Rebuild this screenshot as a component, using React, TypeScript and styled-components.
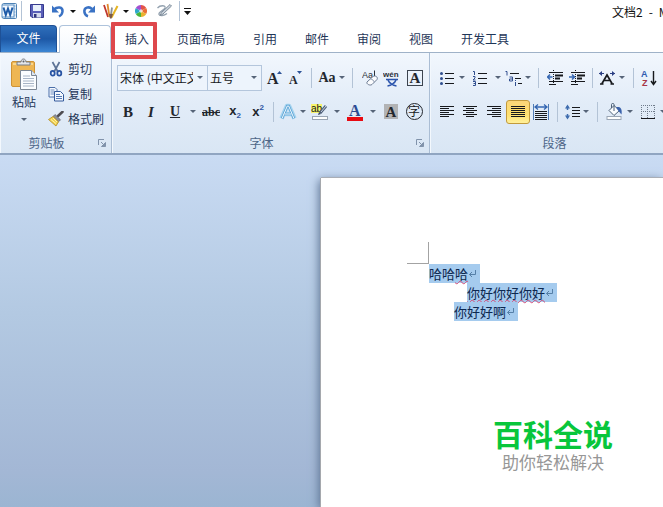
import React from "react";
import styled, { createGlobalStyle, css } from "styled-components";

const Global = createGlobalStyle`
  * { box-sizing: border-box; }
  html, body, #root { height: 100%; }
  body {
    margin: 0;
    overflow: hidden;
    background: #fff;
    font: 12px/16px "Noto Sans CJK SC", "Liberation Sans", sans-serif;
    color: #1f3658;
  }
  button, select { font: inherit; color: inherit; }
`;

const Window = styled.div`
  display: flex;
  flex-direction: column;
  min-height: 100%;
  overflow: hidden;
`;

/* ---------- shared controls ---------- */

const Tool = styled.button<{ $w: number; $active?: boolean }>`
  flex: none;
  display: flex;
  align-items: center;
  justify-content: center;
  width: ${(p) => p.$w}px;
  height: 24px;
  padding: 0;
  border: 0;
  background: none;
  ${(p) =>
    p.$active &&
    css`
      border: 1px solid #c29a3c;
      border-radius: 3px;
      background: linear-gradient(#fbd67a, #ffe06e 60%, #fff09a);
    `}
`;

const Divider = styled.span<{ $w: number }>`
  flex: none;
  display: flex;
  justify-content: center;
  width: ${(p) => p.$w}px;
  &::before {
    content: "";
    width: 1px;
    height: 20px;
    background: #b3c3d6;
  }
`;

const Glyph = styled.span<{ $size?: number; $sans?: boolean }>`
  font: bold ${(p) => p.$size ?? 15}px/16px
    ${(p) => (p.$sans ? '"Liberation Sans", sans-serif' : '"Liberation Serif", serif')};
  color: #23272e;
  white-space: nowrap;
`;
const Italic = styled(Glyph)`font-style: italic;`;
const Underlined = styled(Glyph)`text-decoration: underline;`;
const Struck = styled(Glyph)`text-decoration: line-through;`;
const Script = styled.small<{ $up?: boolean }>`
  font-size: 8px;
  line-height: 8px;
  color: #2f56a3;
  vertical-align: ${(p) => (p.$up ? "6px" : "-3px")};
`;

const Caret = ({ dark }: { dark?: boolean }) => (
  <svg width="6" height="3" viewBox="0 0 6 3" aria-hidden>
    <path d="M0 0h6L3 3z" fill={dark ? "#111" : "#566478"} />
  </svg>
);
const Drop = ({ w = 8, label, dark }: { w?: number; label: string; dark?: boolean }) => (
  <Tool $w={w} aria-label={label}>
    <Caret dark={dark} />
  </Tool>
);

type IconProps = { w?: number; h?: number; children: React.ReactNode };
const Icon = ({ w = 16, h = 16, children }: IconProps) => (
  <svg width={w} height={h} viewBox={`0 0 ${w} ${h}`} fill="none" aria-hidden>
    {children}
  </svg>
);

/* ---------- title bar ---------- */

const TitleBar = styled.header`
  display: flex;
  align-items: center;
  height: 24px;
  padding-bottom: 2px;
  white-space: nowrap;
  overflow: hidden;
`;
const QuickAccess = styled.div`
  flex: none;
  display: flex;
  align-items: center;
  width: 192px;
`;
const Title = styled.h1`
  flex: none;
  display: flex;
  gap: 6px;
  margin: 2px 0 0 420px;
  font-size: 12px;
  font-weight: 400;
  line-height: 16px;
  color: #111;
`;

const WordLogo = () => (
  <Icon>
    <rect x="1.500" y=".5" width="14" height="15" rx="1" fill="#e9f2fb" stroke="#4f83b5" />
    <path d="M12.500 3h2M12.500 6h2M12.500 9h2M12.500 12h2" stroke="#8fb0d2" />
    <rect x="1" y="2" width="12" height="12" fill="#f4f9fe" stroke="#5b8fc4" />
    <path d="M2.500 4.500 4.800 12 7 5.500 9.200 12 11.500 4.500" stroke="#1f5ca8" strokeWidth="2" />
  </Icon>
);
const SaveIcon = () => (
  <Icon w={14} h={14}>
    <path d="M.5.5h13v13H2L.5 12z" fill="#5a5fb8" stroke="#363a8e" />
    <rect x="3" y="1" width="8" height="6" fill="#e8effa" />
    <rect x="3" y="9" width="8" height="4.500" fill="#d4d9ec" />
    <rect x="4" y="10" width="2.500" height="3.500" fill="#30347c" />
  </Icon>
);
const UndoIcon = () => (
  <Icon w={14} h={14}>
    <path d="M3 5.500C6 2.500 12 2.500 11.500 7.500c-.2 2.400-1.600 4-3.500 5" stroke="#3a72c4" strokeWidth="2.500" />
    <path d="M1 1.500v7h7z" fill="#3a72c4" />
  </Icon>
);
const RedoIcon = () => (
  <Icon w={14} h={14}>
    <path d="M10 5C7 2 1.800 3.500 2.400 8c.3 2 1.600 3.600 3.600 4.200" stroke="#3a72c4" strokeWidth="2.500" />
    <path d="M13 1.500v7H6z" fill="#3a72c4" />
  </Icon>
);
const PensIcon = () => (
  <Icon>
    <path d="m1 2 4 12" stroke="#c0392f" strokeWidth="1.800" />
    <path d="m4.500 1 2 13" stroke="#e08a2e" strokeWidth="1.800" />
    <path d="M9 4.500 7.500 15" stroke="#8b9097" strokeWidth="1.800" />
    <path d="M14.500 3 8.500 14.500" stroke="#e6b422" strokeWidth="2" />
    <path d="m6 11 1 4.500h1.500L10 11" fill="#7b5a48" />
  </Icon>
);
const WheelIcon = () => (
  <Icon w={12} h={12}>
    <path d="M6 6V0a6 6 0 0 1 5.200 3z" fill="#e2544a" />
    <path d="M6 6 11.200 3a6 6 0 0 1 0 6z" fill="#ea6f35" />
    <path d="M6 6l5.200 3A6 6 0 0 1 6 12z" fill="#e9b22f" />
    <path d="M6 6v6A6 6 0 0 1 .8 9z" fill="#47b53c" />
    <path d="M6 6 .8 9a6 6 0 0 1 0-6z" fill="#2da9c9" />
    <path d="M6 6 .8 3A6 6 0 0 1 6 0z" fill="#a24fd0" />
    <circle cx="6" cy="6" r="1.800" fill="#fff" opacity=".7" />
  </Icon>
);
const InkIcon = () => (
  <Icon w={16} h={14}>
    <path d="M1.500 4C4 1 10 1 9 4c-1 2.500-7 4-6 6.500.6 1.500 5 1.500 8-1" stroke="#93a1af" strokeWidth="1.300" />
    <path d="M14 .5 15.500 2 7 10l-3 1.500L5.500 8.500z" fill="#cbd4dd" stroke="#7d8b99" />
  </Icon>
);
const CustomizeIcon = () => (
  <Icon w={7} h={7}>
    <path d="M0 3h7L3.500 7z" fill="#111" />
    <path d="M0 .5h7" stroke="#111" />
  </Icon>
);

/* ---------- tabs ---------- */

const Tabs = styled.nav`
  display: flex;
  height: 29px;
  padding-top: 1px;
  border-bottom: 1px solid #9fb2c8;
`;
const FileTab = styled.button`
  flex: none;
  width: 57px;
  margin-right: 2px;
  padding: 0 0 2px;
  border: 1px solid #1f5196;
  border-bottom: 0;
  border-radius: 0 4px 0 0;
  background: linear-gradient(#2f6fbb, #1d58a6 50%, #3c86d4);
  color: #fff;
`;
const Tab = styled.button<{ $active?: boolean }>`
  position: relative;
  flex: none;
  height: 28px;
  padding: 0 13px 2px;
  border: 1px solid transparent;
  border-bottom: 0;
  background: none;
  ${(p) =>
    p.$active &&
    css`
      height: 28px;
      margin-bottom: -1px;
      border-color: #aec3dc;
      border-radius: 4px 4px 0 0;
      background: linear-gradient(#fff, #f3f8fd);
    `}
`;
const Callout = styled.span`
  position: absolute;
  z-index: 2;
  inset: -4px 5px -6px -1px;
  border: 4px solid #de484c;
  border-radius: 1px;
  pointer-events: none;
`;

/* ---------- ribbon ---------- */

const Ribbon = styled.div`
  display: flex;
  height: 102px;
  border-bottom: 2px solid #90a5c1;
  background: linear-gradient(#f2f7fd, #e2ecf8 50%, #d9e6f4);
  overflow: hidden;
`;
const Group = styled.section<{ $w?: number }>`
  flex: ${(p) => (p.$w ? `0 0 ${p.$w}px` : "1 0 268px")};
  display: flex;
  flex-direction: column;
  border-right: 1px solid #aabdd4;
  box-shadow: inset 1px 0 #f3f8fd;
`;
const Rows = styled.div<{ $pad: number }>`
  flex: 1;
  display: flex;
  flex-direction: column;
  gap: 9px;
  padding: 12px 0 0 ${(p) => p.$pad}px;
`;
const Row = styled.div`
  display: flex;
  align-items: center;
  height: 25px;
`;
const GroupFooter = styled.footer`
  display: flex;
  align-items: center;
  height: 20px;
  color: #4d6587;
`;
const GroupName = styled.span`
  flex: 1;
  text-align: center;
`;
const GroupFoot = ({ name, launcher = true }: { name: string; launcher?: boolean }) => (
  <GroupFooter>
    <GroupName>{name}</GroupName>
    <Tool $w={18} aria-label={name}>
      {launcher && (
        <Icon w={8} h={8}>
          <path d="M.5 6V.5H6" stroke="#8193ab" />
          <path d="M3 3l3 3M7.500 3.500v4h-4z" stroke="#8193ab" fill="#8193ab" />
        </Icon>
      )}
    </Tool>
  </GroupFooter>
);

const ClipboardBody = styled.div`
  flex: 1;
  display: flex;
`;
const PasteButton = styled.button`
  flex: none;
  display: flex;
  flex-direction: column;
  align-items: center;
  width: 48px;
  padding: 5px 0 0;
  border: 0;
  background: none;
  line-height: 24px;
  & > svg:last-child { margin-top: 4px; }
`;
const ClipList = styled.div`
  display: flex;
  flex-direction: column;
  padding-top: 3px;
`;
const ClipButton = styled.button`
  display: flex;
  align-items: center;
  gap: 4px;
  height: 25px;
  padding: 0;
  border: 0;
  background: none;
  white-space: nowrap;
`;

const PasteIcon = () => (
  <Icon w={28} h={32}>
    <rect x="1.500" y="3.500" width="23" height="25" rx="1.500" fill="#eeb653" stroke="#cf9335" />
    <path d="M3 5h20v2H3z" fill="#f8d68d" />
    <path d="M7 7V4h4c0-4 5-4 5 0h4v3z" fill="#e2e5e9" stroke="#767c85" />
    <circle cx="13.500" cy="3.500" r="1" fill="#5b616b" />
    <path d="M10.500 12.500h11l5 5v14h-16z" fill="#fbfdff" stroke="#7c8795" />
    <path d="M21.500 12.500v5h5" fill="#dfe7f0" stroke="#7c8795" />
    <path d="M13 18h7M13 20.500h11M13 23h11M13 25.500h11M13 28h11" stroke="#a7b4c6" />
  </Icon>
);
const CutIcon = () => (
  <Icon>
    <path d="M4.500 1 10 11M11.500 1 6 11" stroke="#5d7396" strokeWidth="1.700" />
    <ellipse cx="4.700" cy="12.200" rx="2" ry="2.400" stroke="#2854a3" strokeWidth="1.800" />
    <ellipse cx="11.300" cy="12.200" rx="2" ry="2.400" stroke="#2854a3" strokeWidth="1.800" />
  </Icon>
);
const CopyIcon = () => (
  <Icon>
    <path d="M1 1.500h6l2 2V11H1z" fill="#f4f8fe" stroke="#4b6fa9" />
    <path d="M2.500 4h4M2.500 6h4M2.500 8h4" stroke="#6d8dc0" />
    <path d="M6.500 5.500h6l3 3v6.500h-9z" fill="#f4f8fe" stroke="#33599b" />
    <path d="M8 8.500h4M8 10.500h6M8 12.500h6" stroke="#5479b5" />
  </Icon>
);
const BrushIcon = () => (
  <Icon>
    <path d="M14.500.8 10 5" stroke="#4f4d52" strokeWidth="2.600" strokeLinecap="round" />
    <path d="m7 3.500 5.500 5.300-2 2L5 5.500z" fill="#8c8f98" stroke="#5c5f68" strokeWidth=".7" />
    <path d="M5 5.500.5 8.500 8 15l2.500-4.200z" fill="#f2d24f" stroke="#b38b25" strokeWidth=".8" />
    <path d="m3 8.500 5 4M5 7l4 4" stroke="#fff3a8" />
  </Icon>
);

/* ---------- font group ---------- */

const Combo = styled.label<{ $w: number }>`
  flex: none;
  display: flex;
  align-items: center;
  width: ${(p) => p.$w}px;
  height: 26px;
  padding-right: 4px;
  border: 1px solid #b4c6dc;
  background: #edf4fc;
  & + & { border-left: 0; }
`;
const Picker = styled.select`
  flex: 1;
  min-width: 0;
  margin-right: 4px;
  padding: 0 0 0 2px;
  border: 0;
  appearance: none;
  background: none;
  color: #16181c;
  text-overflow: clip;
  outline: none;
`;

const GrowIcon = ({ down }: { down?: boolean }) => (
  <Icon w={16} h={16}>
    <text x="1" y="14" fontFamily="Liberation Serif" fontWeight="bold" fontSize={down ? 12 : 16} fill="#23272e">A</text>
    <path d={down ? "M9 1h5l-2.500 3z" : "M11 4h5l-2.500-3z"} fill="#2d5397" />
  </Icon>
);
const ClearIcon = () => (
  <Icon>
    <text x="0" y="8" fontFamily="Liberation Sans" fontSize="9" fill="#2b3038">Aa</text>
    <path d="M12.500 .5v6" stroke="#2b3038" />
    <path d="m5 12 6-5.500c2-1.500 5.500.5 4 3L10 14.500c-2 1.500-6-.5-5-2.500z" fill="#fbfcfe" stroke="#6a7a92" />
    <path d="M8.500 9c2 .3 3.300 1.500 3.800 3.300" stroke="#8c9ab0" />
  </Icon>
);
const PinyinIcon = () => (
  <Icon w={18} h={18}>
    <text x="0" y="8" fontFamily="Liberation Sans" fontWeight="bold" fontSize="8" fill="#2b3038">wén</text>
    <path d="M3 10.500h12M5 11c1 3 5 5.500 8.500 6M13 11c-1 3-5 5.500-8.500 6" stroke="#2c55ad" strokeWidth="1.500" />
  </Icon>
);
const BoxedA = styled(Glyph)`
  width: 16px;
  height: 16px;
  border: 1px solid #3c444f;
  line-height: 14px;
  text-align: center;
`;
const ShadedA = styled(Glyph)`
  width: 14px;
  height: 15px;
  background: #b2b3b5;
  text-align: center;
`;
const CircledChar = styled.span`
  width: 17px;
  height: 17px;
  border: 1px solid #23272e;
  border-radius: 50%;
  font-size: 12px;
  line-height: 14px;
  color: #16181c;
  text-align: center;
`;
const GlowIcon = () => (
  <Icon w={18} h={18}>
    <path d="M2.500 15.500 8 3h2l5.500 12.500M5 11h8" stroke="#a5d3ef" strokeWidth="4.500" strokeLinejoin="round" />
    <path d="M3 15.500 8.300 3h1.400L15 15.500M5.500 11h7" stroke="#5ba3d5" strokeWidth="2.500" />
    <path d="M3 15.500 8.300 3h1.400L15 15.500M5.500 11h7" stroke="#f1f9ff" />
  </Icon>
);
const HighlightIcon = () => (
  <Icon w={18} h={18}>
    <rect x="0" y="1" width="11" height="9" fill="#f7f46c" />
    <text x="0" y="9" fontFamily="Liberation Sans" fontSize="10" fill="#16181c">ab</text>
    <path d="m15 3-6 7" stroke="#50617c" strokeWidth="3" />
    <path d="m15 3-5 6" stroke="#c9d4e3" />
    <path d="M8 9l2 2-3 1z" fill="#38465d" />
    <rect x="1.500" y="13.500" width="15" height="3" fill="#fdfefe" stroke="#9aa6b5" />
  </Icon>
);
const FontColorIcon = () => (
  <Icon w={16} h={18}>
    <text x="2" y="13" fontFamily="Liberation Serif" fontWeight="bold" fontSize="16" fill="#2c4c94">A</text>
    <path d="M0 14h16v4H0z" fill="#e80a12" />
  </Icon>
);

/* ---------- paragraph group ---------- */

const INK = "#17191d";
const NAVY = "#304f8f";

const BulletsIcon = () => (
  <Icon>
    <path d="M6 3.500h9M6 8.500h9M6 13.500h9" stroke={INK} />
    <circle cx="2.500" cy="3.500" r="1.500" fill={NAVY} />
    <circle cx="2.500" cy="8.500" r="1.500" fill={NAVY} />
    <circle cx="2.500" cy="13.500" r="1.500" fill={NAVY} />
  </Icon>
);
const NumbersIcon = () => (
  <Icon>
    <path d="M6 3.500h9M6 8.500h9M6 13.500h9" stroke={INK} />
    <path d="M1 1.500h1.500V5M1 6.500h2v1.500l-2 2h2.500M1 11.500h2.500v4H1M1.500 13.500h2" stroke={NAVY} />
  </Icon>
);
const LevelsIcon = () => (
  <Icon w={18}>
    <path d="M6 3.500h9M11 8.500h6M14 13.500h4" stroke={INK} />
    <path d="M1.500 1.500H3V5.500M5.500 7h3v4h-3V9h3M11.500 12v4M11.500 10v1" stroke={NAVY} />
  </Icon>
);
const IndentIcon = ({ right }: { right?: boolean }) => (
  <Icon>
    <path d="M2 2.500h14M2 11.500h14M2 14.500h7" stroke={INK} />
    <path d="M8 5.500h8M8 8.500h5" stroke={INK} strokeWidth="2" />
    <path d="M6.500 0v16" stroke={INK} strokeDasharray="1 1" />
    <path d={right ? "M0 7h5M3 4.500 5.500 7 3 9.500" : "M5.500 7h-5M3 4.500.5 7 3 9.500"} stroke="#3567b2" strokeWidth="1.500" />
  </Icon>
);
const AsianLayoutIcon = () => (
  <Icon>
    <path d="M1 14h3.500M11.500 14H15M3 13.500 8 5l5 8.500M5 10.500h6" stroke={INK} strokeWidth="1.700" />
    <path d="M0 3.500h5M11 3.500h5" stroke="#2b3f83" />
    <path d="M3 1v5L0 3.500zM13 1v5l3-2.500z" fill="#2b3f83" />
  </Icon>
);
const SortIcon = () => (
  <Icon w={16} h={18}>
    <text x="0" y="8" fontFamily="Liberation Sans" fontWeight="bold" fontSize="9" fill="#2f5bb0">A</text>
    <text x="1" y="17" fontFamily="Liberation Sans" fontWeight="bold" fontSize="9" fill="#a63546">Z</text>
    <path d="M12.500 2v13M10 12l2.500 3.500L15 12" stroke={INK} strokeWidth="1.400" />
  </Icon>
);
const alignPaths = {
  left: "M1 2.500h14M1 4.500h9M1 6.500h14M1 8.500h9M1 10.500h14M1 12.500h9",
  center: "M1 2.500h14M4 4.500h8M1 6.500h14M4 8.500h8M1 10.500h14M4 12.500h8",
  right: "M1 2.500h14M6 4.500h9M1 6.500h14M6 8.500h9M1 10.500h14M6 12.500h9",
  justify: "M1 2.500h14M1 4.500h14M1 6.500h14M1 8.500h14M1 10.500h14M1 12.500h14",
};
const AlignIcon = ({ kind }: { kind: keyof typeof alignPaths }) => (
  <Icon>
    <path d={alignPaths[kind]} stroke={INK} />
  </Icon>
);
const DistributeIcon = () => (
  <Icon>
    <path d="M.5 0v16M15.500 0v16" stroke="#4f7bb5" />
    <path d="M2 3h12M5 .5 2 3l3 2.500M11 .5 14 3l-3 2.500" stroke="#3567b2" strokeWidth="1.300" />
    <path d="M2 7.500h12M2 9.500h12M2 11.500h12M2 13.500h12M2 15.500h12" stroke={INK} />
  </Icon>
);
const SpacingIcon = () => (
  <Icon>
    <path d="M8 3.500h8M8 6.500h8M8 9.500h8M8 12.500h8" stroke={INK} />
    <path d="M3.500 2v4M3.500 10v4" stroke="#3f6dae" strokeWidth="1.500" />
    <path d="M1 4.500 3.500.5 6 4.500zM1 11.500l2.500 4 2.500-4z" fill="#3f6dae" />
  </Icon>
);
const FillIcon = () => (
  <Icon w={17} h={17}>
    <path d="m3 7.500 5-5 5.500 5L8 12.500z" fill="#fbfdff" stroke="#4d6178" />
    <path d="M8 8V1.500c0-1.500-2.500-1.500-2.500 0V5" stroke="#4d6178" />
    <path d="M10 4.500c4-1.500 6.500 1 5.500 7l-3-3.500z" fill="#3b62ab" />
    <rect x="1" y="13.500" width="14" height="3" fill="#fdfefe" stroke="#9aa6b5" />
  </Icon>
);
const BorderIcon = () => (
  <Icon w={14} h={14}>
    <path d="M0 .5h14M0 6.500h14M.5 0v13M6.500 0v13M13.500 0v13" stroke="#6f7b8b" strokeDasharray="1 1" />
    <path d="M0 13.500h14" stroke={INK} />
  </Icon>
);

/* ---------- document ---------- */

const Workspace = styled.main`
  flex: 1;
  display: grid;
  grid-template-columns: 321px 1fr;
  padding-top: 23px;
  background: linear-gradient(#c9dbf3, #b3c9e2 45%, #a3b7d5 90%, #9bb5d2);
`;
const Page = styled.article`
  grid-column: 2;
  min-height: 329px;
  padding: 64px 0 0 86px;
  background: #fff;
  box-shadow: -1px 0 #a5a8ad, 0 -1px #a9aeb6, -2px 2px 9px 0 #5b7191;
`;
const MarginCorner = styled.div`
  width: 22px;
  height: 22px;
  border: solid #a3a3a3;
  border-width: 0 1px 1px 0;
`;
const Line = styled.p<{ $indent?: number }>`
  display: flex;
  height: 19px;
  margin: 0 0 0 ${(p) => 22 + (p.$indent ?? 0)}px;
  font-size: 13px;
  line-height: 19px;
  color: #0d2850;
`;
const Selected = styled.span`
  display: flex;
  align-items: center;
  padding-right: 3px;
  background: #a5cbee;
  white-space: nowrap;
`;
const Misspelt = styled.span`
  text-decoration: underline wavy #cf4b78 1px;
  text-underline-offset: 1px;
  text-decoration-skip-ink: none;
`;
const ReturnMark = () => (
  <Icon w={9} h={9}>
    <path d="M7.500 1v4.500H1.500M4 3 1.500 5.500 4 8" stroke="#5680a8" />
  </Icon>
);
const Brand = styled.aside`
  display: flex;
  flex-direction: column;
  align-items: center;
  width: 122px;
  margin: 94px 0 0 85px;
  white-space: nowrap;
`;
const BrandName = styled.strong`
  font-size: 30px;
  font-weight: 700;
  line-height: 36px;
  color: #08c63b;
`;
const BrandLine = styled.span`
  font-size: 17px;
  font-weight: 400;
  line-height: 22px;
  color: #979797;
`;

export default function App() {
  return (
    <Window>
      <Global />
      <TitleBar>
        <QuickAccess>
          <Tool $w={18} aria-label="Word"><WordLogo /></Tool>
          <Divider $w={7} />
          <Tool $w={23} aria-label="保存"><SaveIcon /></Tool>
          <Tool $w={20} aria-label="撤消"><UndoIcon /></Tool>
          <Drop w={10} label="撤消列表" dark />
          <Tool $w={22} aria-label="恢复"><RedoIcon /></Tool>
          <Tool $w={22} aria-label="画笔"><PensIcon /></Tool>
          <Drop label="画笔列表" dark />
          <Tool $w={22} aria-label="颜色"><WheelIcon /></Tool>
          <Tool $w={24} aria-label="墨迹"><InkIcon /></Tool>
          <Divider $w={6} />
          <Tool $w={10} aria-label="自定义快速访问工具栏"><CustomizeIcon /></Tool>
        </QuickAccess>
        <Title>
          <span>文档2</span>
          <span>-</span>
          <span>Microsoft Word</span>
        </Title>
      </TitleBar>

      <Tabs>
        <FileTab>文件</FileTab>
        <Tab $active>开始</Tab>
        <Tab>插入<Callout /></Tab>
        <Tab>页面布局</Tab>
        <Tab>引用</Tab>
        <Tab>邮件</Tab>
        <Tab>审阅</Tab>
        <Tab>视图</Tab>
        <Tab>开发工具</Tab>
      </Tabs>

      <Ribbon>
        <Group $w={112}>
          <ClipboardBody>
            <PasteButton>
              <PasteIcon />
              粘贴
              <Caret />
            </PasteButton>
            <ClipList>
              <ClipButton><CutIcon />剪切</ClipButton>
              <ClipButton><CopyIcon />复制</ClipButton>
              <ClipButton><BrushIcon />格式刷</ClipButton>
            </ClipList>
          </ClipboardBody>
          <GroupFoot name="剪贴板" />
        </Group>

        <Group $w={318}>
          <Rows $pad={5}>
            <Row>
              <Combo $w={91}>
                <Picker aria-label="字体"><option>宋体 (中文正文)</option></Picker>
                <Caret />
              </Combo>
              <Combo $w={54}>
                <Picker aria-label="字号"><option>五号</option></Picker>
                <Caret />
              </Combo>
              <Tool $w={24} aria-label="增大字体"><GrowIcon /></Tool>
              <Tool $w={20} aria-label="缩小字体"><GrowIcon down /></Tool>
              <Divider $w={10} />
              <Tool $w={22}><Glyph $size={14}>Aa</Glyph></Tool>
              <Drop label="更改大小写" />
              <Divider $w={12} />
              <Tool $w={24} aria-label="清除格式"><ClearIcon /></Tool>
              <Tool $w={20} aria-label="拼音指南"><PinyinIcon /></Tool>
              <Tool $w={26}><BoxedA>A</BoxedA></Tool>
            </Row>
            <Row>
              <Tool $w={22}><Glyph>B</Glyph></Tool>
              <Tool $w={24}><Italic>I</Italic></Tool>
              <Tool $w={24}><Underlined $size={14}>U</Underlined></Tool>
              <Drop w={12} label="下划线" />
              <Tool $w={24}><Struck $size={12}>abc</Struck></Tool>
              <Tool $w={24}><Glyph $sans $size={13}>x<Script>2</Script></Glyph></Tool>
              <Tool $w={22}><Glyph $sans $size={13}>x<Script $up>2</Script></Glyph></Tool>
              <Divider $w={8} />
              <Tool $w={22} aria-label="文本效果"><GlowIcon /></Tool>
              <Drop label="文本效果列表" />
              <Tool $w={26} aria-label="突出显示"><HighlightIcon /></Tool>
              <Drop label="突出显示颜色" />
              <Tool $w={28} aria-label="字体颜色"><FontColorIcon /></Tool>
              <Drop label="字体颜色列表" />
              <Tool $w={28}><ShadedA>A</ShadedA></Tool>
              <Tool $w={18}><CircledChar>字</CircledChar></Tool>
            </Row>
          </Rows>
          <GroupFoot name="字体" />
        </Group>

        <Group>
          <Rows $pad={6}>
            <Row>
              <Tool $w={22} aria-label="项目符号"><BulletsIcon /></Tool>
              <Drop label="项目符号列表" />
              <Tool $w={28} aria-label="编号"><NumbersIcon /></Tool>
              <Drop label="编号列表" />
              <Tool $w={22} aria-label="多级列表"><LevelsIcon /></Tool>
              <Drop label="多级列表样式" />
              <Divider $w={12} />
              <Tool $w={22} aria-label="减少缩进量"><IndentIcon /></Tool>
              <Tool $w={22} aria-label="增加缩进量"><IndentIcon right /></Tool>
              <Divider $w={8} />
              <Tool $w={22} aria-label="中文版式"><AsianLayoutIcon /></Tool>
              <Drop label="中文版式列表" />
              <Divider $w={14} />
              <Tool $w={18} aria-label="排序"><SortIcon /></Tool>
            </Row>
            <Row>
              <Tool $w={22} aria-label="左对齐"><AlignIcon kind="left" /></Tool>
              <Tool $w={24} aria-label="居中"><AlignIcon kind="center" /></Tool>
              <Tool $w={24} aria-label="右对齐"><AlignIcon kind="right" /></Tool>
              <Tool $w={24} $active aria-label="两端对齐"><AlignIcon kind="justify" /></Tool>
              <Tool $w={22} aria-label="分散对齐"><DistributeIcon /></Tool>
              <Divider $w={10} />
              <Tool $w={20} aria-label="行距"><SpacingIcon /></Tool>
              <Drop label="行距列表" />
              <Divider $w={14} />
              <Tool $w={20} aria-label="底纹"><FillIcon /></Tool>
              <Drop w={12} label="底纹颜色" />
              <Tool $w={23} aria-label="边框"><BorderIcon /></Tool>
              <Drop label="边框列表" />
            </Row>
          </Rows>
          <GroupFoot name="段落" launcher={false} />
        </Group>
      </Ribbon>

      <Workspace>
        <Page>
          <MarginCorner />
          <Line><Selected>哈哈<Misspelt>哈</Misspelt><ReturnMark /></Selected></Line>
          <Line $indent={38}><Selected><Misspelt>你好你好你好</Misspelt><ReturnMark /></Selected></Line>
          <Line $indent={25}><Selected>你好好啊<ReturnMark /></Selected></Line>
          <Brand>
            <BrandName>百科全说</BrandName>
            <BrandLine>助你轻松解决</BrandLine>
          </Brand>
        </Page>
      </Workspace>
    </Window>
  );
}
